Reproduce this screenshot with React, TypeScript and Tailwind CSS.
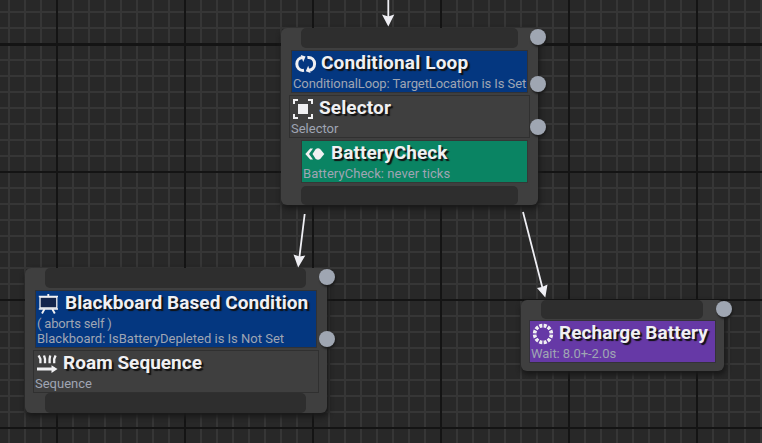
import type { ReactNode } from "react";

const band = "bg-[#2e2e2e] rounded-[5px] shrink-0";

function Title({ children, className = "" }: { children: ReactNode; className?: string }) {
  return (
    <span
      className={`font-bold text-[19px] leading-[24px] text-[#f0f0f2] whitespace-nowrap [text-shadow:2px_2px_1px_#111] ${className}`}
    >
      {children}
    </span>
  );
}

function Detail({ children, className = "" }: { children: ReactNode; className?: string }) {
  return (
    <div className={`pl-px text-[13px] leading-[15px] text-[#9fa5b3] whitespace-nowrap ${className}`}>{children}</div>
  );
}

function Pin({ className }: { className: string }) {
  return (
    <span
      className={`absolute w-4 h-4 rounded-full bg-[#9fa6b2] shadow-[1px_2px_2px_#1c1c1c] ${className}`}
    />
  );
}

function LoopIcon() {
  return (
    <svg width="22" height="20" viewBox="0 0 22 20" className="shrink-0" fill="none" stroke="#f0f0f2" strokeWidth="3">
      <path d="M9 16.3C4.5 17 1.8 13.6 1.8 10C1.8 6.2 4.3 3.8 7.6 3.6" />
      <path d="M12.4 3.5C16.9 2.8 19.6 6.2 19.6 9.8C19.6 13.6 17.1 16 13.8 16.2" />
      <path d="M5.8 .9L10.6 2.6L8.2 8Z" fill="#f0f0f2" stroke="none" />
      <path d="M15.6 18.9L10.8 17.2L13.2 11.8Z" fill="#f0f0f2" stroke="none" />
    </svg>
  );
}

function SelectorIcon() {
  return (
    <svg width="20" height="20" viewBox="0 0 20 20" className="shrink-0" fill="none" stroke="#f0f0f2" strokeWidth="2">
      <path d="M1 5V1H5M15 1H19V5M19 15V19H15M5 19H1V15" />
      <path d="M5 5H15V15H5Z" fill="#f0f0f2" stroke="none" />
    </svg>
  );
}

function ServiceIcon() {
  return (
    <svg width="20" height="16" viewBox="0 0 20 16" className="shrink-0" fill="#f0f0f2">
      <path d="M5.2 2.5H8L4 8L8 13.5H5.2L.3 8Z" />
      <path d="M7.5 8L10.4 3.4Q13 1 15.6 3.4L19.3 8L15.6 12.6Q13 15 10.4 12.6Z" />
    </svg>
  );
}

function BoardIcon() {
  return (
    <svg width="21" height="20" viewBox="0 0 21 20" className="shrink-0" fill="none" stroke="#f0f0f2">
      <path d="M2 3H18.8V14H2Z" fill="#12244c" strokeWidth="1.3" />
      <path d="M.8 2.5H20M.8 15H20" strokeWidth="1.4" />
      <path d="M10.3 0V3M6.5 15L4 19.5M14.3 15L16.8 19.5" strokeWidth="1.9" />
    </svg>
  );
}

function SequenceIcon() {
  return (
    <svg width="21" height="18" viewBox="0 0 21 18" className="shrink-0" fill="none" stroke="#f0f0f2" strokeWidth="2.3">
      <path d="M1.6 .5L3.4 4V8.2M7 .5L8 4V8.2M13.2 .5L12.6 4V8.2M18.6 .5L17.2 4V8.2" />
      <path d="M0 14H16" strokeWidth="3" />
      <path d="M14.5 10.2L20.5 14L14.5 17.9Z" fill="#f0f0f2" stroke="none" />
    </svg>
  );
}

function WaitIcon() {
  return (
    <svg width="22" height="22" viewBox="0 0 22 22" className="shrink-0" fill="none">
      <circle cx="11" cy="11" r="8.4" stroke="#f0f0f2" strokeWidth="3.6" pathLength="120" strokeDasharray="7 3" strokeDashoffset="8.5" />
    </svg>
  );
}

const minor = Array.from({ length: 49 }, (_, i) => i);

function Grid() {
  return (
    <svg width="762" height="443" className="absolute left-0 top-0" shapeRendering="crispEdges">
      {minor.map((i) => (
        <path key={i} d={`M${9 + i * 16} 0V443M0 ${12 + i * 16}H762`} stroke="#363636" strokeWidth="2" />
      ))}
      <path d="M57 0V443M185 0V443M313 0V443M441 0V443M569 0V443M697 0V443M0 172H762M0 300H762M0 428H762" stroke="#141414" strokeWidth="2" />
      <path d="M0 44.5H762" stroke="#141414" strokeWidth="3" />
    </svg>
  );
}

function Wires() {
  return (
    <svg width="762" height="443" className="absolute left-0 top-0" stroke="#efeff4" strokeWidth="1.8" fill="#efeff4">
      <path d="M388.3 0V18M304.7 214L299.3 258M523 212L542.5 288" />
      <path d="M382 14.5L388.3 16.5L394.3 14.5L388.3 26.5ZM293.5 254.5L299.6 256.5L305.3 255.5L298.2 267.5ZM537 288L542 287L547.5 284.5L545.3 297.5Z" stroke="none" />
    </svg>
  );
}

const nodeClass =
  "absolute flex flex-col bg-[#3f3f3f] rounded-[6px] shadow-[1px_3px_5px_1px_#191919]";

export default function App() {
  return (
    <main className="relative w-[762px] h-[443px] overflow-hidden bg-[#282828] font-[Roboto,sans-serif]">
      <Grid />

      <section className={`${nodeClass} left-[281px] top-[28px] w-[257px] h-[177px]`}>
        <div className={`${band} h-5 ml-5 w-[217px]`} />
        <div className="mt-[3px] ml-[11px] w-[235px] h-[41px] bg-[#043780] shadow-[0_0_0_1px_#303237]">
          <div className="flex items-center h-[25px] pl-[3px] gap-[4px]">
            <LoopIcon />
            <Title className="-mt-[2px] tracking-[0.16px]">Conditional Loop</Title>
          </div>
          <Detail className="tracking-[-0.09px]">ConditionalLoop: TargetLocation is Is Set</Detail>
        </div>
        <div className="mt-[3px] ml-[8px] w-[241px] h-[43px] border border-[#303030]">
          <div className="flex items-center h-[25px] pl-[3px] gap-[6px]">
            <SelectorIcon />
            <Title className="-mt-px tracking-[0.12px]">Selector</Title>
          </div>
          <Detail>Selector</Detail>
        </div>
        <div className="mt-[3px] ml-[21px] w-[225px] h-[41px] bg-[#0a8463] shadow-[0_0_0_1px_#343836]">
          <div className="flex items-center h-[25px] pl-[3px] gap-[6px]">
            <ServiceIcon />
            <Title className="-mt-[2px] tracking-[0.08px]">BatteryCheck</Title>
          </div>
          <Detail className="tracking-[0.06px]">BatteryCheck: never ticks</Detail>
        </div>
        <div className={`${band} mt-[4px] h-[19px] ml-5 w-[217px]`} />
        <Pin className="left-[249px] top-[1px]" />
        <Pin className="left-[249px] top-[48px]" />
        <Pin className="left-[249px] top-[91px]" />
      </section>

      <section className={`${nodeClass} left-[25px] top-[268px] w-[302px] h-[145px]`}>
        <div className={`${band} h-5 ml-5 w-[261px]`} />
        <div className="mt-[3px] ml-[11px] w-[280px] h-[56px] bg-[#043780] shadow-[0_0_0_1px_#303237]">
          <div className="flex items-center h-[25px] pl-[2px] gap-[6px]">
            <BoardIcon />
            <Title className="-mt-[2px] tracking-[0.08px]">Blackboard Based Condition</Title>
          </div>
          <Detail className="tracking-[-0.18px]">( aborts self )</Detail>
          <Detail>Blackboard: IsBatteryDepleted is Is Not Set</Detail>
        </div>
        <div className="mt-[3px] ml-[8px] w-[286px] h-[43px] border border-[#303030]">
          <div className="flex items-center h-[25px] pl-[3px] gap-[5px]">
            <SequenceIcon />
            <Title className="-mt-[2px] tracking-[0.03px]">Roam Sequence</Title>
          </div>
          <Detail>Sequence</Detail>
        </div>
        <div className={`${band} h-5 ml-5 w-[261px]`} />
        <Pin className="left-[294px] top-[1px]" />
        <Pin className="left-[294px] top-[63px]" />
      </section>

      <section className={`${nodeClass} left-[521px] top-[300px] w-[203px] h-[71px]`}>
        <div className={`${band} h-[19px] ml-5 w-[162px]`} />
        <div className="mt-[2px] ml-[9px] w-[185px] h-[41px] bg-[#6639a6] shadow-[0_0_0_1px_#343239]">
          <div className="flex items-center h-[25px] pl-[2px] gap-[5px]">
            <WaitIcon />
            <Title className="-mt-[2px] tracking-[0.06px]">Recharge Battery</Title>
          </div>
          <Detail className="tracking-[-0.06px]">Wait: 8.0+-2.0s</Detail>
        </div>
        <Pin className="left-[195px] top-[1px]" />
      </section>

      <Wires />
    </main>
  );
}
